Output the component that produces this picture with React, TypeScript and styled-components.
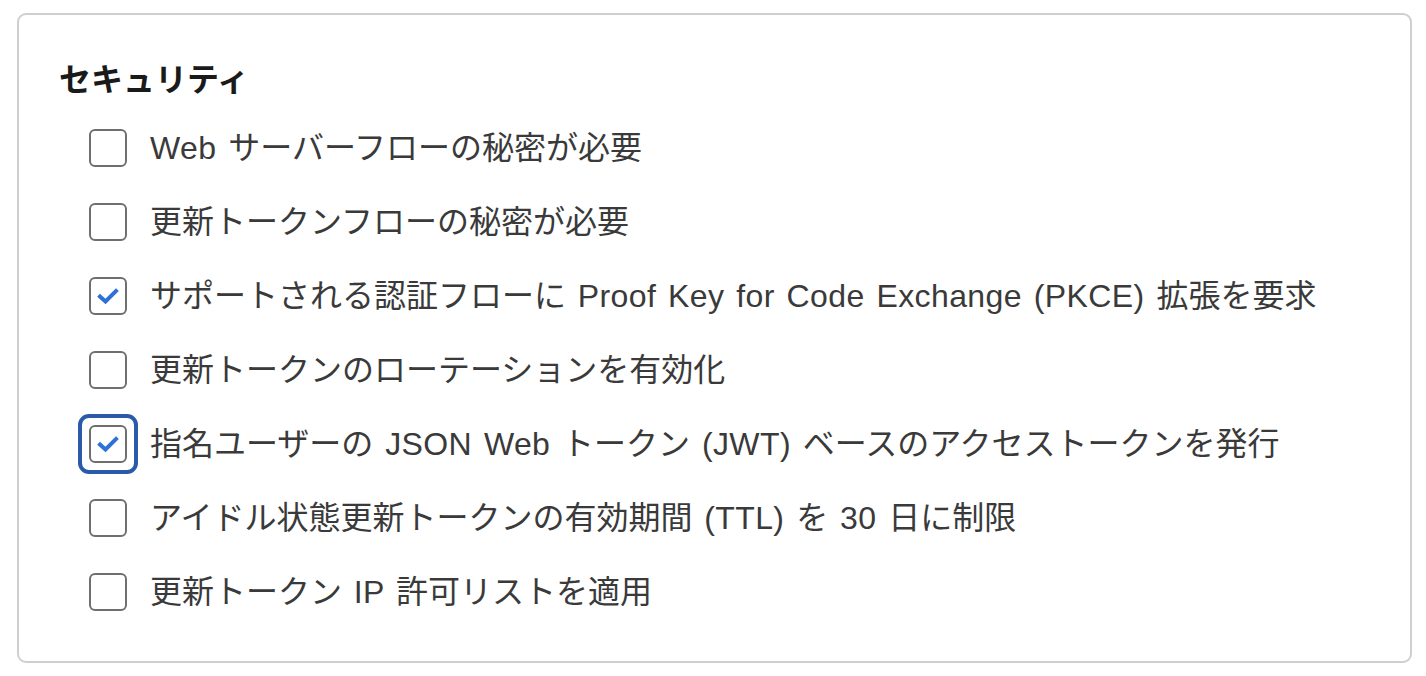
import React, { useState } from "react";
import styled, { createGlobalStyle } from "styled-components";

const GlobalStyle = createGlobalStyle`
  html, body {
    margin: 0;
    padding: 0;
    background: #ffffff;
  }
  body {
    font-family: "Liberation Sans", "Noto Sans CJK JP", sans-serif;
  }
`;

const Page = styled.div`
  padding: 13px 14px 14px 17px;
`;

const Card = styled.section`
  box-sizing: border-box;
  width: 1395px;
  height: 650px;
  border: 2px solid #cfcfcf;
  border-radius: 9px;
  padding: 43px 40px 30px 40px;
`;

const Heading = styled.h2`
  margin: 0 0 15px 0;
  font-size: 32px;
  line-height: 38px;
  font-weight: 700;
  color: #1a1a1a;
  font-family: "Noto Sans CJK JP", sans-serif;
`;

const List = styled.div`
  display: flex;
  flex-direction: column;
  padding-left: 30px;
`;

const Row = styled.label`
  display: flex;
  align-items: center;
  height: 74px;
  gap: 23px;
  cursor: pointer;
`;

const BoxWrap = styled.span<{ $focused?: boolean }>`
  position: relative;
  display: flex;
  width: 38px;
  height: 38px;
  flex-shrink: 0;
  &::after {
    content: "";
    display: ${({ $focused }) => ($focused ? "block" : "none")};
    position: absolute;
    inset: -11px;
    border: 4px solid #2b5ba8;
    border-radius: 11px;
  }
`;

const Box = styled.span`
  box-sizing: border-box;
  width: 38px;
  height: 38px;
  border: 2px solid #6f6f6f;
  border-radius: 6px;
  background: #fff;
  display: flex;
  align-items: center;
  justify-content: center;
`;

const Label = styled.span`
  font-size: 32px;
  line-height: 38px;
  color: #3a3a3a;
  font-family: "Liberation Sans", "Noto Sans CJK JP", sans-serif;
  white-space: pre;
`;

const Latin = styled.span`
  letter-spacing: 0.4px;
  word-spacing: 2.5px;
`;

const Check = () => (
  <svg width="22" height="18" viewBox="0 0 22 18">
    <path
      d="M3 9.5 L8.5 14.5 L19 4"
      fill="none"
      stroke="#2f72d6"
      strokeWidth="4"
      strokeLinecap="square"
      strokeLinejoin="miter"
    />
  </svg>
);

const items = [
  { text: "Web サーバーフローの秘密が必要", checked: false },
  { text: "更新トークンフローの秘密が必要", checked: false },
  {
    text: "サポートされる認証フローに Proof Key for Code Exchange (PKCE) 拡張を要求",
    checked: true,
  },
  { text: "更新トークンのローテーションを有効化", checked: false },
  {
    text: "指名ユーザーの JSON Web トークン (JWT) ベースのアクセストークンを発行",
    checked: true,
    focused: true,
  },
  { text: "アイドル状態更新トークンの有効期間 (TTL) を 30 日に制限", checked: false },
  { text: "更新トークン IP 許可リストを適用", checked: false },
];

// split text so latin runs get their own spacing
function renderText(text: string) {
  const parts = text.split(/([ -~]+)/).filter(Boolean);
  return parts.map((p, i) =>
    /^[ -~]+$/.test(p) ? <Latin key={i}>{p}</Latin> : <span key={i}>{p}</span>
  );
}

export default function App() {
  const [state, setState] = useState(items.map((i) => i.checked));
  return (
    <>
      <GlobalStyle />
      <Page>
        <Card>
          <Heading>セキュリティ</Heading>
          <List>
            {items.map((item, idx) => (
              <Row
                key={idx}
                onClick={() =>
                  setState((s) => s.map((v, i) => (i === idx ? !v : v)))
                }
              >
                <BoxWrap $focused={item.focused}>
                  <Box>{state[idx] && <Check />}</Box>
                </BoxWrap>
                <Label>{renderText(item.text)}</Label>
              </Row>
            ))}
          </List>
        </Card>
      </Page>
    </>
  );
}
